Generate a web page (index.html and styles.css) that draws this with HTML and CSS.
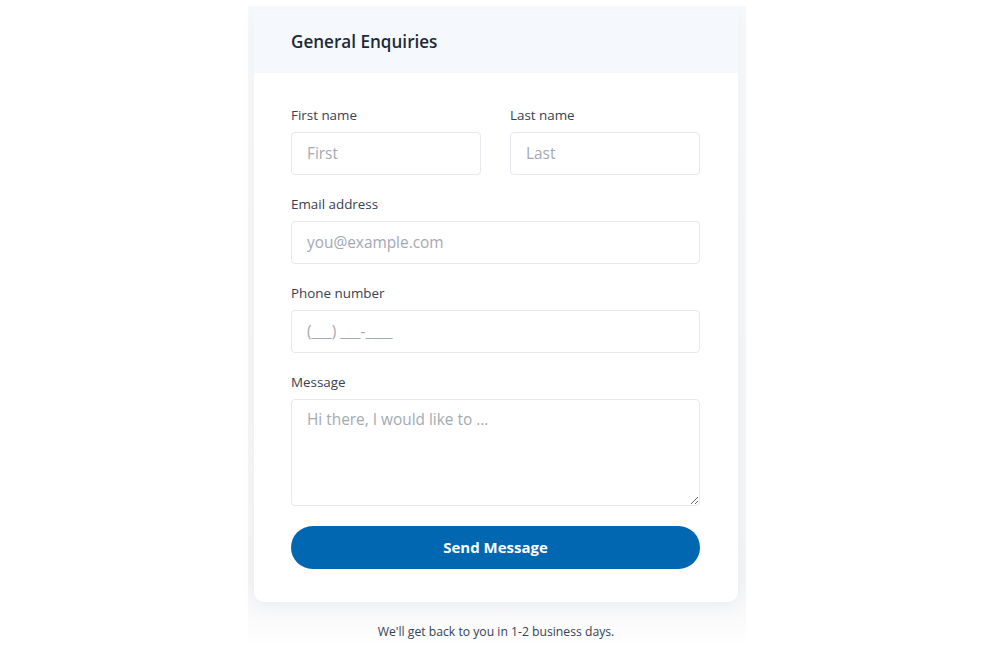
FILE: index.html
```html
<!DOCTYPE html>
<html lang="en">
<head>
<meta charset="utf-8">
<title>General Enquiries</title>
<link rel="stylesheet" href="styles.css">
</head>
<body>
<div class="wrap">
  <div class="card">
    <div class="card-head">
      <h2 class="title">General Enquiries</h2>
    </div>
    <form class="card-body">
      <div class="row">
        <div class="field">
          <label class="label">First name</label>
          <input class="input" type="text" placeholder="First">
        </div>
        <div class="field">
          <label class="label">Last name</label>
          <input class="input" type="text" placeholder="Last">
        </div>
      </div>
      <div class="field">
        <label class="label">Email address</label>
        <input class="input" type="email" placeholder="you@example.com">
      </div>
      <div class="field">
        <label class="label">Phone number</label>
        <input class="input" type="tel" placeholder="(___) ___-____">
      </div>
      <div class="field last">
        <label class="label">Message</label>
        <textarea class="input textarea" placeholder="Hi there, I would like to ..."></textarea>
      </div>
      <button class="btn" type="button">Send Message</button>
    </form>
  </div>
  <p class="note">We'll get back to you in 1-2 business days.</p>
</div>
</body>
</html>
```
FILE: styles.css
```css
* { box-sizing: border-box; }
html, body { margin: 0; padding: 0; background: #ffffff; }
body {
  font-family: "Open Sans", "Noto Sans", sans-serif;
  color: #374151;
}
.wrap {
  width: 498px;
  margin: 6px 0 0 248px;
  padding: 4px 8px 8px 6px;
  background: linear-gradient(to bottom, #f7f8fa 0%, #f4f5f7 90%, #ffffff 100%);
}
.card {
  background: #ffffff;
  border-radius: 0 0 10px 10px;
  box-shadow: 0 6px 18px rgba(17, 24, 39, 0.04);
  overflow: hidden;
}
.card-head {
  background: #f5f9fe;
  height: 63px;
  display: flex;
  align-items: center;
  padding: 0 37px;
}
.title {
  margin: 0;
  font-size: 17.1px;
  font-weight: 600;
  color: #1f2937;
  line-height: 22px;
}
.card-body {
  padding: 33px 38px 33px 37px;
  display: flex;
  flex-direction: column;
}
.row {
  display: grid;
  grid-template-columns: 190px 190px;
  column-gap: 29px;
}
.field { margin-bottom: 20px; }
.label {
  display: block;
  font-size: 13.4px;
  line-height: 18px;
  margin-bottom: 8px;
  color: #374151;
}
.input {
  display: block;
  width: 100%;
  height: 43px;
  border: 1px solid #e6e8ee;
  border-radius: 4px;
  padding: 0 15px;
  font-family: inherit;
  font-size: 15.4px;
  color: #111827;
  background: #fff;
  outline: none;
}
.input::placeholder { color: #a3a9b3; }
.textarea {
  height: 107px;
  padding: 10px 15px;
  resize: vertical;
  line-height: 20px;
}
.field.last { margin-bottom: 20px; }
.btn {
  height: 43px;
  width: 100%;
  border: none;
  border-radius: 22px;
  background: #0067b0;
  color: #fff;
  font-family: inherit;
  font-size: 15px;
  font-weight: 700;
  padding: 0 0 2px;
}
.note {
  margin: 22px 0 0;
  text-align: center;
  font-size: 12.2px;
  line-height: 16px;
  color: #374151;
}
```
